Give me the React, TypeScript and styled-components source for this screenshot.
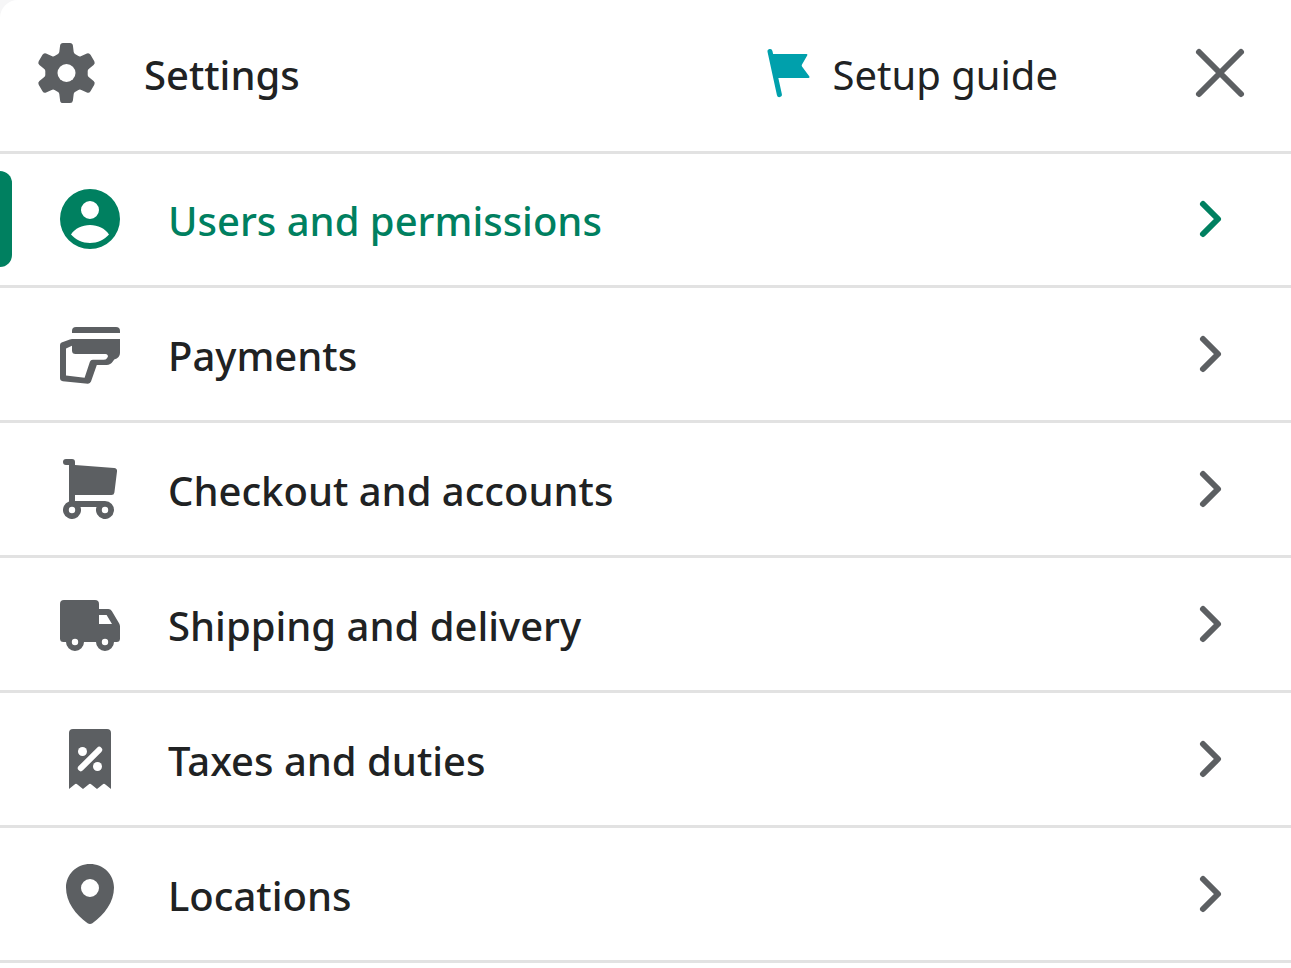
import React from "react";
import styled, { createGlobalStyle, css } from "styled-components";

const GlobalStyle = createGlobalStyle`
  *, *::before, *::after { box-sizing: border-box; }
  body {
    margin: 0;
    background: #f6f6f7;
    color: #202223;
    font-family: "Noto Sans", "Open Sans", sans-serif;
    font-size: 40px;
    line-height: 60px;
  }
`;

const Panel = styled.main`
  min-height: 100vh;
  background: #ffffff;
  border-top-left-radius: 18px;
`;

const Header = styled.header`
  display: flex;
  align-items: center;
  height: 154px;
  padding: 0 41px 5px 36px;
  border-bottom: 3px solid #e2e2e2;
`;

const Title = styled.h1`
  flex: 1;
  margin: 0 0 0 48px;
  padding-top: 3px;
  font-size: 40px;
  font-weight: 500;
  line-height: 60px;
`;

const plainButton = css`
  display: flex;
  align-items: center;
  padding: 0;
  border: 0;
  background: none;
  color: inherit;
  font: inherit;
  cursor: pointer;
`;

const GuideButton = styled.button`
  ${plainButton}
  gap: 14px;
  margin-right: 132px;
`;

const GuideLabel = styled.span`
  padding-top: 3px;
`;

const CloseButton = styled.button`
  ${plainButton}
`;

const Icon = styled.svg<{ $color?: string }>`
  display: block;
  flex: none;
  width: 60px;
  height: 60px;
  fill: ${(p) => p.$color ?? "#5c5f62"};
  stroke: none;
`;

const LineIcon = styled(Icon)`
  fill: none;
  stroke: ${(p) => p.$color ?? "#5c5f62"};
  stroke-width: 6;
  stroke-linecap: round;
`;

const List = styled.ul`
  margin: -1px 0 0;
  padding: 0;
  list-style: none;
`;

const Item = styled.li`
  border-bottom: 3px solid #e2e2e2;
`;

const ItemLink = styled.a<{ $active: boolean }>`
  position: relative;
  display: flex;
  align-items: center;
  height: 132px;
  padding: 0 51px 0 60px;
  color: ${(p) => (p.$active ? "#008060" : "#202223")};
  font-weight: 500;
  text-decoration: none;

  ${(p) =>
    p.$active &&
    css`
      &::before {
        content: "";
        position: absolute;
        top: 18px;
        bottom: 18px;
        left: 0;
        width: 12px;
        border-radius: 0 12px 12px 0;
        background: #008060;
      }
    `}
`;

const ItemLabel = styled.span`
  flex: 1;
  margin-left: 48px;
  padding-top: 3px;
`;

const GEAR_HALF =
  "M30 0H34Q36.6 0 36.9 2.6L37.7 9Q37.9 10.3 39 10.9L42.4 13Q43.5 13.7 44.8 13.2L50.9 10.5Q53.2 9.7 54.5 11.8L58.3 18.2Q59.5 20.3 57.6 22L53 25.8Q51.7 26.8 51.7 28V32Q51.7 33.2 53 34.2L57.6 38Q59.5 39.7 58.3 41.8L54.5 48.2Q53.2 50.3 50.9 49.5L44.8 46.8Q43.5 46.3 42.4 47L39 49.1Q37.9 49.7 37.7 51L36.9 57.4Q36.6 60 34 60H30Z";

const items = [
  {
    label: "Users and permissions",
    active: true,
    art: (
      <path
        fillRule="evenodd"
        d="M30 0a30 30 0 1 0 0 60a30 30 0 1 0 0-60ZM30 12a9 9 0 1 1 0 18a9 9 0 1 1 0-18ZM11 45.5C15 39.5 22 36 30 36S45 39.5 49 45.5C44.5 50.7 37.5 54 30 54S15.5 50.7 11 45.5Z"
      />
    ),
  },
  {
    label: "Payments",
    art: (
      <>
        <path d="M12 9V7a4 4 0 0 1 4-4H56a4 4 0 0 1 4 4V9Z" />
        <path
          fillRule="evenodd"
          d="M0 21Q0 19.2 1.6 18.4L9.8 15.4Q10.8 15 12 15H60V29Q60 33.8 54.2 35.6Q53.6 36.4 52.8 37.6Q50.6 41 46.6 41H36.8L31 57.6Q30.2 59.8 27.8 59.7L2.8 57.2Q0 56.8 0 54ZM6 24.4V51.6L24.6 53.8L29.9 37.8Q30.6 35.8 32.8 35.8H43.5Q45.8 35.8 47 34.2Q48.6 32.2 47.6 31Q46.8 30 45.4 30H15.6Q12 30 12 26.5V21.8Z"
        />
      </>
    ),
  },
  {
    label: "Checkout and accounts",
    art: (
      <path
        fillRule="evenodd"
        d="M6 0H12A3 3 0 0 1 15 3V6L54.2 8.9A3 3 0 0 1 57 12.4L54.4 33.4A3 3 0 0 1 51.4 36H15V42H45A9 9 0 1 1 36.5 48H20.5A9 9 0 1 1 9 42.5V6H6A3 3 0 0 1 6 0ZM12 47.8a3.2 3.2 0 1 0 0 6.4a3.2 3.2 0 1 0 0-6.4ZM45 47.8a3.2 3.2 0 1 0 0 6.4a3.2 3.2 0 1 0 0-6.4Z"
      />
    ),
  },
  {
    label: "Shipping and delivery",
    art: (
      <path
        fillRule="evenodd"
        d="M4 6H35A4 4 0 0 1 39 10V15H48.4Q50.6 15 51.8 17L59.2 29.6Q60 31 60 32.6V44.5A3.5 3.5 0 0 1 56.5 48H54A9 9 0 0 1 36 48H24A9 9 0 0 1 6 48H3.5A3.5 3.5 0 0 1 0 44.5V10A4 4 0 0 1 4 6ZM39 21V30H52L46.6 21ZM15 44.8a3.2 3.2 0 1 0 0 6.4a3.2 3.2 0 1 0 0-6.4ZM45 44.8a3.2 3.2 0 1 0 0 6.4a3.2 3.2 0 1 0 0-6.4Z"
      />
    ),
  },
  {
    label: "Taxes and duties",
    art: (
      <>
        <path d="M13 0H47A4 4 0 0 1 51 4V60L45.4 55.4Q44 54.2 42.6 55.4L37 60L31.4 55.4Q30 54.2 28.6 55.4L23 60L17.4 55.4Q16 54.2 14.6 55.4L9 60V4A4 4 0 0 1 13 0Z" />
        <circle cx="22.5" cy="22.5" r="4.5" fill="#fff" />
        <circle cx="37.5" cy="37.5" r="4.5" fill="#fff" />
        <path d="M39.2 20.8 20.8 39.2" stroke="#fff" strokeWidth="6" strokeLinecap="round" />
      </>
    ),
  },
  {
    label: "Locations",
    art: (
      <path
        fillRule="evenodd"
        d="M30 0C16.7 0 6 10.4 6 23.4C6 38 15.5 50.5 27.6 59.2Q30 60.8 32.4 59.2C44.5 50.5 54 38 54 23.4C54 10.4 43.3 0 30 0ZM30 15a9 9 0 1 1 0 18a9 9 0 1 1 0-18Z"
      />
    ),
  },
];

export default function App() {
  return (
    <>
      <GlobalStyle />
      <Panel>
        <Header>
          <Icon viewBox="0 0 60 60" aria-hidden="true">
            <path d={GEAR_HALF} />
            <path d={GEAR_HALF} transform="translate(61 0) scale(-1 1)" />
            <circle cx="30.5" cy="30" r="9" fill="#fff" />
          </Icon>
          <Title>Settings</Title>
          <GuideButton type="button">
            <Icon viewBox="0 0 60 60" $color="#00a0ac" aria-hidden="true">
              <path d="M12 11H47.6Q49 11.2 48.2 12.6L43 21.6Q42.4 22.6 43 23.6L50.4 33.6Q51 34.8 49.6 35H17Z" />
              <path d="M11 8.5 20.4 51.6" stroke="#00a0ac" strokeWidth="5" strokeLinecap="round" />
            </Icon>
            <GuideLabel>Setup guide</GuideLabel>
          </GuideButton>
          <CloseButton type="button" aria-label="Close">
            <LineIcon viewBox="0 0 60 60" aria-hidden="true">
              <path d="M9 9 51 51M51 9 9 51" />
            </LineIcon>
          </CloseButton>
        </Header>
        <nav aria-label="Settings">
          <List>
            {items.map(({ label, art, active = false }) => {
              const tint = active ? "#008060" : "#5c5f62";
              return (
                <Item key={label}>
                  <ItemLink href="#" $active={active} aria-current={active ? "page" : undefined}>
                    <Icon viewBox="0 0 60 60" $color={tint} aria-hidden="true">
                      {art}
                    </Icon>
                    <ItemLabel>{label}</ItemLabel>
                    <LineIcon viewBox="0 0 60 60" $color={tint} aria-hidden="true">
                      <path d="M23 15 38 30 23 45" strokeLinejoin="round" />
                    </LineIcon>
                  </ItemLink>
                </Item>
              );
            })}
          </List>
        </nav>
      </Panel>
    </>
  );
}
